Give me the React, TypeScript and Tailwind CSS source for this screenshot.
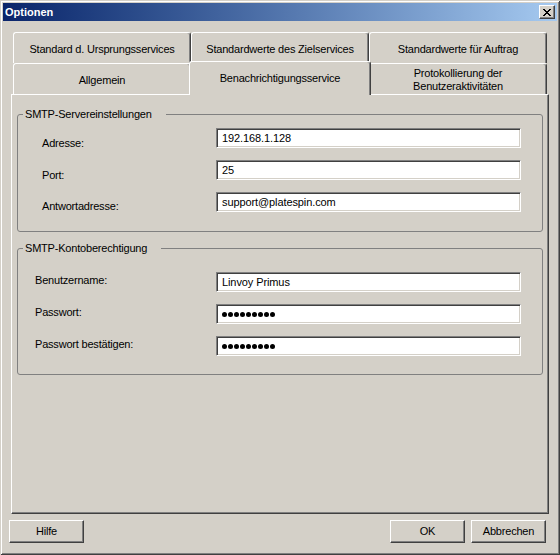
import React from 'react';

const raised =
  'border border-t-white border-l-white border-b-[#404040] border-r-[#404040] shadow-[inset_-1px_-1px_#808080]';
const sunken =
  'border border-t-[#808080] border-l-[#808080] border-b-white border-r-white shadow-[inset_1px_1px_#404040,inset_-1px_-1px_#d4d0c8]';

const TextBox: React.FC<{ value?: string; password?: boolean }> = ({ value, password }) => (
  <div className={`w-[305px] h-[20px] bg-white flex items-center pl-[5px] ${sunken}`}>
    {password ? (
      <div className="flex gap-[1px]">
        {Array.from({ length: 9 }).map((_, i) => (
          <span key={i} className="w-[5px] h-[5px] rounded-full bg-black" />
        ))}
      </div>
    ) : (
      <span className="leading-[13px] tracking-[-0.1px]">{value}</span>
    )}
  </div>
);

const Row: React.FC<{ label: string; labelClass: string; children: React.ReactNode }> = ({
  label,
  labelClass,
  children,
}) => (
  <div className="flex h-[20px]">
    <span className={`leading-[13px] ${labelClass}`}>{label}</span>
    {children}
  </div>
);

const Tab: React.FC<{ className?: string; children: React.ReactNode }> = ({ className = '', children }) => (
  <div
    className={`w-[178px] h-[31px] flex items-center justify-center text-center bg-[#d4d0c8] border-t border-l border-r border-t-white border-l-white border-r-[#404040] rounded-t-[3px] shadow-[inset_-1px_0_#808080] ${className}`}
  >
    {children}
  </div>
);

const Button: React.FC<{ children: React.ReactNode }> = ({ children }) => (
  <div className={`w-[75px] h-[23px] flex items-center justify-center bg-[#d4d0c8] ${raised}`}>{children}</div>
);

const CloseGlyph = () => (
  <svg width="8" height="7" viewBox="0 0 8 7" shapeRendering="crispEdges">
    <path
      fill="#000"
      d="M0 0h2v1H0zM6 0h2v1H6zM1 1h2v1H1zM5 1h2v1H5zM2 2h4v1H2zM3 3h2v1H3zM2 4h4v1H2zM1 5h2v1H1zM5 5h2v1H5zM0 6h2v1H0zM6 6h2v1H6z"
    />
  </svg>
);

export default function App() {
  return (
    <div className="w-[560px] h-[555px] p-[3px] flex flex-col bg-[#d4d0c8] text-black text-[11px] tracking-[-0.2px] font-['Liberation_Sans',Arial,sans-serif] shadow-[inset_1px_1px_#d4d0c8,inset_-1px_-1px_#404040,inset_2px_2px_#fff,inset_-2px_-2px_#808080]">
      {/* Title bar */}
      <div className="h-[18px] flex items-center justify-between pl-[2px] pr-[2px] bg-linear-to-r from-[#0a246a] to-[#a6caf0]">
        <span className="text-white font-bold tracking-normal">Optionen</span>
        <div className={`w-[16px] h-[14px] flex items-center justify-center bg-[#d4d0c8] ${raised}`}>
          <CloseGlyph />
        </div>
      </div>

      <div className="flex flex-col pl-[8px] pt-[11px]">
        {/* Tabs */}
        <div className="ml-[2px] flex h-[31px]">
          <Tab className="pt-[3px]">Standard d. Ursprungsservices</Tab>
          <Tab className="pt-[3px]">Standardwerte des Zielservices</Tab>
          <Tab className="pt-[3px]">Standardwerte für Auftrag</Tab>
        </div>
        <div className="ml-[2px] flex h-[31px] items-start">
          <Tab className="pt-[3px]">Allgemein</Tab>
          <div className="relative z-10 -mt-[2px] -mx-[2px] w-[182px] h-[34px] flex items-center justify-center bg-[#d4d0c8] border-t border-l border-r border-t-white border-l-white border-r-[#404040] rounded-t-[3px] shadow-[inset_-1px_0_#808080]">
            Benachrichtigungsservice
          </div>
          <Tab className="pt-[1px] leading-[13px]">
            Protokollierung der
            <br />
            Benutzeraktivitäten
          </Tab>
        </div>

        {/* Panel */}
        <div className="w-[538px] h-[420px] flex flex-col pt-[12px] bg-[#d4d0c8] border border-t-white border-l-white border-r-[#404040] border-b-[#404040] shadow-[inset_-1px_-1px_#808080]">
          <fieldset className="ml-[5px] w-[526px] border border-[#808080] rounded-[3px] pt-[7px] pb-[19px]">
            <legend className="ml-[5px] pl-[2px] pr-[14px] leading-[14px]">SMTP-Servereinstellungen</legend>
            <div className="flex flex-col gap-[12px] pl-[24px]">
              <Row label="Adresse:" labelClass="w-[174px] mt-[9px]">
                <TextBox value="192.168.1.128" />
              </Row>
              <Row label="Port:" labelClass="w-[174px] mt-[9px]">
                <TextBox value="25" />
              </Row>
              <Row label="Antwortadresse:" labelClass="w-[174px] mt-[8px]">
                <TextBox value="support@platespin.com" />
              </Row>
            </div>
          </fieldset>

          <fieldset className="mt-[9px] ml-[5px] w-[526px] border border-[#808080] rounded-[3px] pt-[17px] pb-[18px]">
            <legend className="ml-[5px] pl-[2px] pr-[14px] leading-[14px]">SMTP-Kontoberechtigung</legend>
            <div className="flex flex-col gap-[12px] pl-[17px]">
              <Row label="Benutzername:" labelClass="w-[181px] mt-[2px]">
                <TextBox value="Linvoy Primus" />
              </Row>
              <Row label="Passwort:" labelClass="w-[181px] mt-[2px]">
                <TextBox password />
              </Row>
              <Row label="Passwort bestätigen:" labelClass="w-[181px] mt-[2px]">
                <TextBox password />
              </Row>
            </div>
          </fieldset>
        </div>
      </div>

      {/* Buttons */}
      <div className="flex justify-between mt-[6px] pl-[6px] pr-[11px]">
        <Button>Hilfe</Button>
        <div className="flex gap-[6px]">
          <Button>OK</Button>
          <Button>Abbrechen</Button>
        </div>
      </div>
    </div>
  );
}
